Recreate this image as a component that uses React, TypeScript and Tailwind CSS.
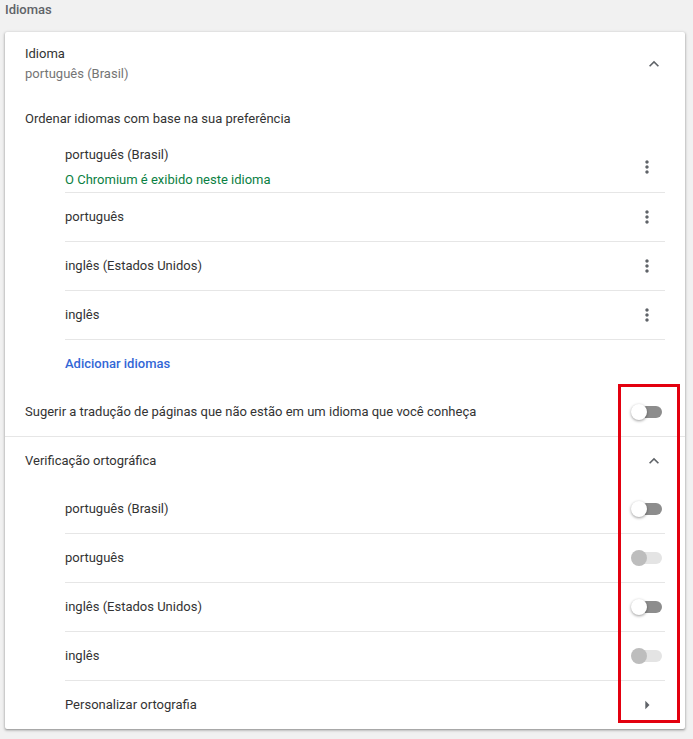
import React from "react";

const languages = [
  { name: "português (Brasil)", note: "O Chromium é exibido neste idioma" },
  { name: "português" },
  { name: "inglês (Estados Unidos)" },
  { name: "inglês" },
];

const spellcheck = [
  { name: "português (Brasil)", disabled: false },
  { name: "português", disabled: true },
  { name: "inglês (Estados Unidos)", disabled: false },
  { name: "inglês", disabled: true },
];

function ChevronUp() {
  return (
    <svg width="20" height="20" viewBox="0 0 24 24" fill="#5f6368">
      <path d="M7.41 15.41L12 10.83l4.59 4.58L18 14l-6-6-6 6z" />
    </svg>
  );
}

function MoreVert() {
  return (
    <svg width="20" height="20" viewBox="0 0 24 24" fill="#5f6368">
      <path d="M12 8c1.1 0 2-.9 2-2s-.9-2-2-2-2 .9-2 2 .9 2 2 2zm0 2c-1.1 0-2 .9-2 2s.9 2 2 2 2-.9 2-2-.9-2-2-2zm0 6c-1.1 0-2 .9-2 2s.9 2 2 2 2-.9 2-2-.9-2-2-2z" />
    </svg>
  );
}

function ArrowRight() {
  return (
    <svg width="20" height="20" viewBox="0 0 24 24" fill="#5f6368">
      <path d="M10 17l5-5-5-5v10z" />
    </svg>
  );
}

function Toggle({ disabled }: { disabled?: boolean }) {
  return (
    <div className="relative h-4 w-[31px]">
      <div
        className={`absolute left-[4px] right-0 top-[2px] h-3 rounded-full ${
          disabled ? "bg-[#e4e4e4]" : "bg-[#8d8d8d]"
        }`}
      />
      <div
        className={`absolute left-0 top-0 h-4 w-4 rounded-full ${
          disabled
            ? "bg-[#bdbdbd]"
            : "bg-white shadow-[0_1px_3px_rgba(0,0,0,0.4)]"
        }`}
      />
    </div>
  );
}

export default function App() {
  return (
    <div className="relative min-h-[739px] bg-[#f1f1f1] pl-[5px] pr-[8px] font-[Roboto,sans-serif] text-[13px] text-[#333]">
      <div className="h-8 leading-5 font-medium text-[#5f6368]">Idiomas</div>

      <div className="rounded-[2px] bg-white shadow-[0_1px_2px_rgba(0,0,0,0.3),0_1px_3px_1px_rgba(0,0,0,0.12)]">
        <div className="flex h-16 items-center pl-5 pr-[21px]">
          <div className="flex-1 leading-5">
            <div>Idioma</div>
            <div className="text-[#757575]">português (Brasil)</div>
          </div>
          <ChevronUp />
        </div>

        <div className="flex h-[46px] items-center pl-5">
          Ordenar idiomas com base na sua preferência
        </div>

        <div className="ml-[60px] mr-5">
          {languages.map((lang) =>
            lang.note ? (
              <div
                key={lang.name}
                className="flex h-[51px] items-center border-b border-[#e6e6e6] pr-2"
              >
                <div className="flex-1 pt-[1px] leading-5">
                  <div>{lang.name}</div>
                  <div className="mt-[5px] text-[#0b8043]">{lang.note}</div>
                </div>
                <MoreVert />
              </div>
            ) : (
              <div
                key={lang.name}
                className="flex h-[49px] items-center border-b border-[#e6e6e6] pr-2"
              >
                <div className="flex-1">{lang.name}</div>
                <MoreVert />
              </div>
            )
          )}
        </div>

        <div className="ml-[60px] flex h-12 items-center font-medium text-[#3367d6]">
          Adicionar idiomas
        </div>

        <div className="flex h-[49px] items-center border-b border-[#e6e6e6] pl-5 pr-[23px]">
          <div className="flex-1">
            Sugerir a tradução de páginas que não estão em um idioma que você conheça
          </div>
          <Toggle />
        </div>

        <div className="flex h-12 items-center pl-5 pr-[21px]">
          <div className="flex-1">Verificação ortográfica</div>
          <ChevronUp />
        </div>

        <div className="ml-[60px] mr-5">
          {spellcheck.map((item) => (
            <div
              key={item.name}
              className="flex h-[49px] items-center border-b border-[#e6e6e6] pr-[3px]"
            >
              <div className="flex-1">{item.name}</div>
              <Toggle disabled={item.disabled} />
            </div>
          ))}
          <div className="flex h-12 items-center pr-2">
            <div className="flex-1">Personalizar ortografia</div>
            <ArrowRight />
          </div>
        </div>
      </div>

      <div className="pointer-events-none absolute left-[618px] top-[384px] h-[339px] w-[62px] border-[3px] border-[#e3000f]" />
    </div>
  );
}
